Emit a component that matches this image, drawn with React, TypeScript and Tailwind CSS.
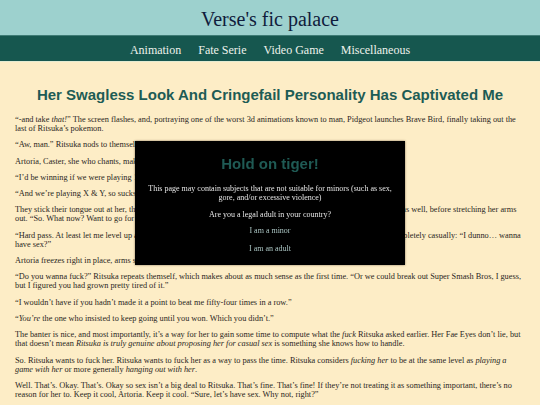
import React from "react";

const serif = { fontFamily: '"Liberation Serif", "DejaVu Serif", serif' };
const sans = { fontFamily: '"Liberation Sans", Arial, sans-serif' };

const navLinks = ["Animation", "Fate Serie", "Video Game", "Miscellaneous"];

function Story() {
  return (
    <article className="px-[15px] text-[8.3px] leading-[9px] text-[#2a2622] [&_p]:mb-[7.3px]">
      <p>
        “-and take <i>that!</i>” The screen flashes, and, portraying one of the worst 3d animations known to man,
        Pidgeot launches Brave Bird, finally taking out the last of Ritsuka’s pokemon.
      </p>
      <p>“Aw, man.” Ritsuka nods to themself, dropping the controller in their lap.</p>
      <p>Artoria, Caster, she who chants, makes a show of blowing on her fingertips.</p>
      <p>“I’d be winning if we were playing 1st gen, you know.”</p>
      <p>“And we’re playing X &amp; Y, so sucks to be you.”</p>
      <p>
        They stick their tongue out at her, though Artoria simply responds by pulling a face and sticking out her own
        tongue as well, before stretching her arms out. “So. What now? Want to go for another?”
      </p>
      <p>
        “Hard pass. At least let me level up a few of my pokemon first, ok?” A beat of silence passes, then Ritsuka asks,
        completely casually: “I dunno… wanna have sex?”
      </p>
      <p>Artoria freezes right in place, arms still raised, her hands remaining stretched above her head. “I—what?”</p>
      <p>
        “Do you wanna fuck?” Ritsuka repeats themself, which makes about as much sense as the first time. “Or we could
        break out Super Smash Bros, I guess, but I figured you had grown pretty tired of it.”
      </p>
      <p>“I wouldn’t have if you hadn’t made it a point to beat me fifty-four times in a row.”</p>
      <p>
        “<i>You’re</i> the one who insisted to keep going until you won. Which you didn’t.”
      </p>
      <p>
        The banter is nice, and most importantly, it’s a way for her to gain some time to compute what the <i>fuck</i>{" "}
        Ritsuka asked earlier. Her Fae Eyes don’t lie, but that doesn’t mean{" "}
        <i>Ritsuka is truly genuine about proposing her for casual sex</i> is something she knows how to handle.
      </p>
      <p>
        So. Ritsuka wants to fuck her. Ritsuka wants to fuck her as a way to pass the time. Ritsuka considers{" "}
        <i>fucking her</i> to be at the same level as <i>playing a game with her</i> or more generally{" "}
        <i>hanging out with her</i>.
      </p>
      <p>
        Well. That’s. Okay. That’s. Okay so sex isn’t a big deal to Ritsuka. That’s fine. That’s fine! If they’re not
        treating it as something important, there’s no reason for her to. Keep it cool, Artoria. Keep it cool. “Sure,
        let’s have sex. Why not, right?”
      </p>
    </article>
  );
}

function AgeGate() {
  return (
    <div className="fixed inset-0 flex items-center justify-center">
      <div
        className="w-[270px] h-[124px] bg-black px-[8px] pt-[14px] text-center text-[8px] leading-[9.5px] text-[#e4e4e4] shadow-[0_0_2px_rgba(60,40,20,0.6)]"
        style={serif}
      >
        <h2 className="text-[15px] leading-[17px] font-bold text-[#1f5a54]" style={sans}>
          Hold on tiger!
        </h2>
        <p className="mt-[12px]">
          This page may contain subjects that are not suitable for minors (such as sex, gore, and/or excessive violence)
        </p>
        <p className="mt-[7px]">Are you a legal adult in your country?</p>
        <div className="mt-[7px] flex flex-col items-center gap-[8px] text-[#a9c3c1]">
          <a href="#">I am a minor</a>
          <a href="#">I am an adult</a>
        </div>
      </div>
    </div>
  );
}

export default function App() {
  return (
    <div className="min-h-screen bg-[#fdedc6]" style={serif}>
      <header className="h-[35px] bg-[#9dd1ce] flex items-center justify-center pt-[2px]">
        <h1 className="text-[20px] leading-none text-[#101c3c]">Verse's fic palace</h1>
      </header>
      <nav className="h-[27px] border-t border-[#3f7c76] border-b border-b-[#e4ecd2] bg-[#16574f] flex items-center justify-center gap-[17px] pt-[2px] text-[12px] text-[#eef2ec]">
        {navLinks.map((link) => (
          <a key={link} href="#">
            {link}
          </a>
        ))}
      </nav>
      <h2
        className="mt-[24px] mb-[12px] text-center text-[15px] leading-[17px] font-bold text-[#1d5c55]"
        style={sans}
      >
        Her Swagless Look And Cringefail Personality Has Captivated Me
      </h2>
      <Story />
      <AgeGate />
    </div>
  );
}
